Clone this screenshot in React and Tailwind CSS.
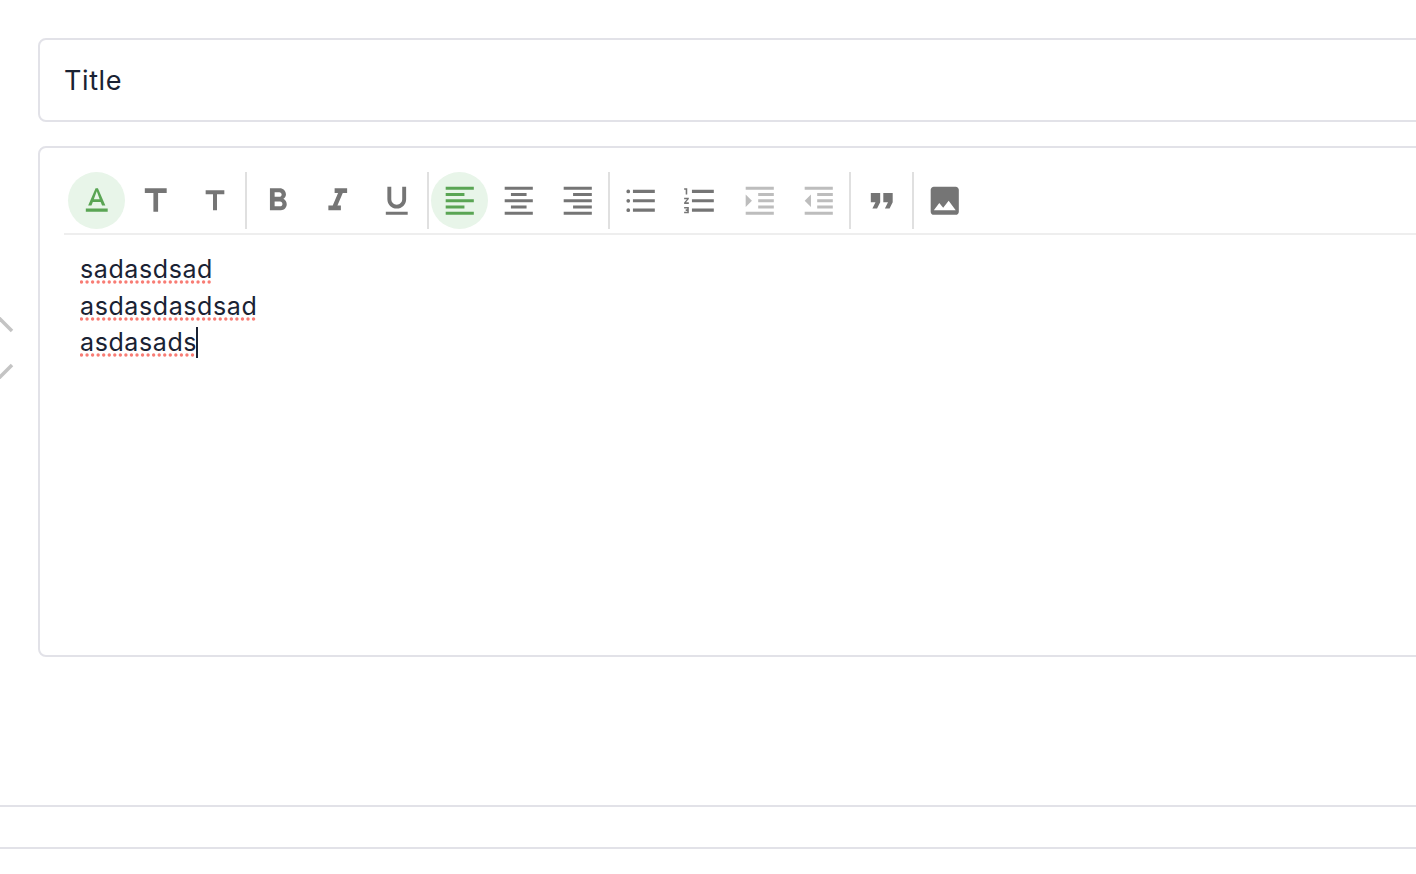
import React from 'react';

const ICONS = {
  textFormat: 'M5 17v2h14v-2H5zm4.5-4.2h5l.9 2.2h2.1L12.75 4h-1.5L6.5 15h2.1l.9-2.2zM12 5.98L13.87 11h-3.74L12 5.98z',
  title: 'M5 4v3h5.5v12h3V7H19V4z',
  bold: 'M15.6 10.79c.97-.67 1.65-1.77 1.65-2.79 0-2.26-1.75-4-4-4H7v14h7.04c2.09 0 3.71-1.7 3.71-3.79 0-1.52-.86-2.82-2.15-3.42zM10 6.5h3c.83 0 1.5.67 1.5 1.5s-.67 1.5-1.5 1.5h-3v-3zm3.5 9H10v-3h3.5c.83 0 1.5.67 1.5 1.5s-.67 1.5-1.5 1.5z',
  italic: 'M10 4v3h2.21l-3.42 8H6v3h8v-3h-2.21l3.42-8H18V4z',
  underline: 'M12 17c3.31 0 6-2.69 6-6V3h-2.5v8c0 1.93-1.57 3.5-3.5 3.5S8.5 12.93 8.5 11V3H6v8c0 3.31 2.69 6 6 6zm-7 2v2h14v-2H5z',
  alignLeft: 'M15 15H3v2h12v-2zm0-8H3v2h12V7zM3 13h18v-2H3v2zm0 8h18v-2H3v2zM3 3v2h18V3H3z',
  alignCenter: 'M7 15v2h10v-2H7zm-4 6h18v-2H3v2zm0-8h18v-2H3v2zm4-6v2h10V7H7zM3 3v2h18V3H3z',
  alignRight: 'M3 21h18v-2H3v2zm6-4h12v-2H9v2zm-6-4h18v-2H3v2zm6-4h12V7H9v2zM3 3v2h18V3H3z',
  bullets: 'M4 10.8a1.2 1.2 0 1 0 0 2.4 1.2 1.2 0 0 0 0-2.4zm0-6a1.2 1.2 0 1 0 0 2.4 1.2 1.2 0 0 0 0-2.4zm0 12a1.2 1.2 0 1 0 0 2.4 1.2 1.2 0 0 0 0-2.4zM7 19h14v-2H7v2zm0-6h14v-2H7v2zm0-8v2h14V5H7z',
  numbers: 'M2 17h2v.5H3v1h1v.5H2v1h3v-4H2v1zm1-9h1V4H2v1h1v3zm-1 3h1.8L2 13.1v.9h3v-1H3.2L5 10.9V10H2v1zm5-6v2h14V5H7zm0 14h14v-2H7v2zm0-6h14v-2H7v2z',
  indent: 'M3 21h18v-2H3v2zM3 8v8l4-4-4-4zm8 9h10v-2H11v2zM3 3v2h18V3H3zm8 6h10V7H11v2zm0 4h10v-2H11v2z',
  outdent: 'M11 17h10v-2H11v2zm-8-5l4 4V8l-4 4zm0 9h18v-2H3v2zM3 3v2h18V3H3zm8 6h10V7H11v2zm0 4h10v-2H11v2z',
  quote: 'M6 17h3l2-4V7H5v6h3zm8 0h3l2-4V7h-6v6h3z',
  image: 'M21 19V5c0-1.1-.9-2-2-2H5c-1.1 0-2 .9-2 2v14c0 1.1.9 2 2 2h14c1.1 0 2-.9 2-2zM8.5 13.5l2.5 3.01L14.5 12l4.5 6H5l3.5-4.5z',
};

const ToolButton = ({ icon, active, disabled, small, className = '' }) => (
  <button
    type="button"
    className={
      'w-[57px] h-[57px] shrink-0 rounded-full flex items-center justify-center ' +
      (active ? 'bg-[#e8f5e9] text-[#5aa554] ' : disabled ? 'text-[#bdbdbd] ' : 'text-[#757575] ') +
      className
    }
  >
    <svg viewBox="0 0 24 24" fill="currentColor" className={small ? 'w-[32px] h-[32px]' : 'w-[37.5px] h-[37.5px]'}>
      <path d={ICONS[icon]} />
    </svg>
  </button>
);

const Divider = ({ className = '' }) => <div className={'w-[2px] h-[57px] shrink-0 bg-[#e0e0e0] ' + className} />;

// red dots of the browser's spell checker
const Misspelled = ({ children }) => (
  <span className="relative inline-block h-[36.5px]">
    {children}
    <svg className="absolute left-0 top-[29px] w-full h-[4px]" fill="none">
      <line x1="1.5" y1="2" x2="100%" y2="2" stroke="#f87c74" strokeWidth="3.4" strokeLinecap="round" strokeDasharray="0 5.55" />
    </svg>
  </span>
);

const App = () => {
  return (
    <div className="relative h-screen w-full overflow-hidden bg-white text-[#1a2233] font-['Inter',sans-serif] tracking-[0.6px]">
      <div className="w-[1700px] pt-[38px] pl-[38px]">
        <div className="h-[84px] border-2 border-[#e2e2e8] rounded-lg flex items-center pl-[24px] pt-[2px] text-[27px]">
          Title
        </div>

        <div className="mt-[24px] h-[511px] border-2 border-[#e2e2e8] rounded-lg pt-[24px] pl-[24px]">
          <div className="flex items-center gap-[2px] pl-[4px] pb-[4px] border-b-2 border-[#eeeeee]">
            <ToolButton icon="textFormat" active />
            <ToolButton icon="title" />
            <ToolButton icon="title" small />
            <Divider className="mr-[1px]" />
            <ToolButton icon="bold" className="-translate-x-[1px]" />
            <ToolButton icon="italic" />
            <ToolButton icon="underline" />
            <Divider />
            <ToolButton icon="alignLeft" active />
            <ToolButton icon="alignCenter" />
            <ToolButton icon="alignRight" />
            <Divider />
            <ToolButton icon="bullets" />
            <ToolButton icon="numbers" />
            <ToolButton icon="indent" disabled className="ml-[1px]" />
            <ToolButton icon="outdent" disabled />
            <Divider />
            <ToolButton icon="quote" />
            <Divider />
            <ToolButton icon="image" />
          </div>

          <div className="pt-[16px] pl-[16px] text-[25px] leading-[36.5px]">
            <div><Misspelled>sadasdsad</Misspelled></div>
            <div><Misspelled>asdasdasdsad</Misspelled></div>
            <div className="flex items-start">
              <Misspelled>asdasads</Misspelled>
              <span className="w-[2px] h-[31px] mt-[3px] -ml-[1px] bg-[#1a2233]" />
            </div>
          </div>
        </div>
      </div>

      <div className="mt-[148px] h-[44px] border-y-2 border-[#e2e2e8]" />

      {/* carousel arrow clipped by the left edge */}
      <svg viewBox="0 0 14 62" className="absolute left-0 top-[317px] w-[14px] h-[62px]" fill="none" stroke="#c4c4c4" strokeWidth="3.5">
        <path d="M-1 1L12 14" />
        <path d="M12 48L-1 61" />
      </svg>
    </div>
  );
};

export default App;
